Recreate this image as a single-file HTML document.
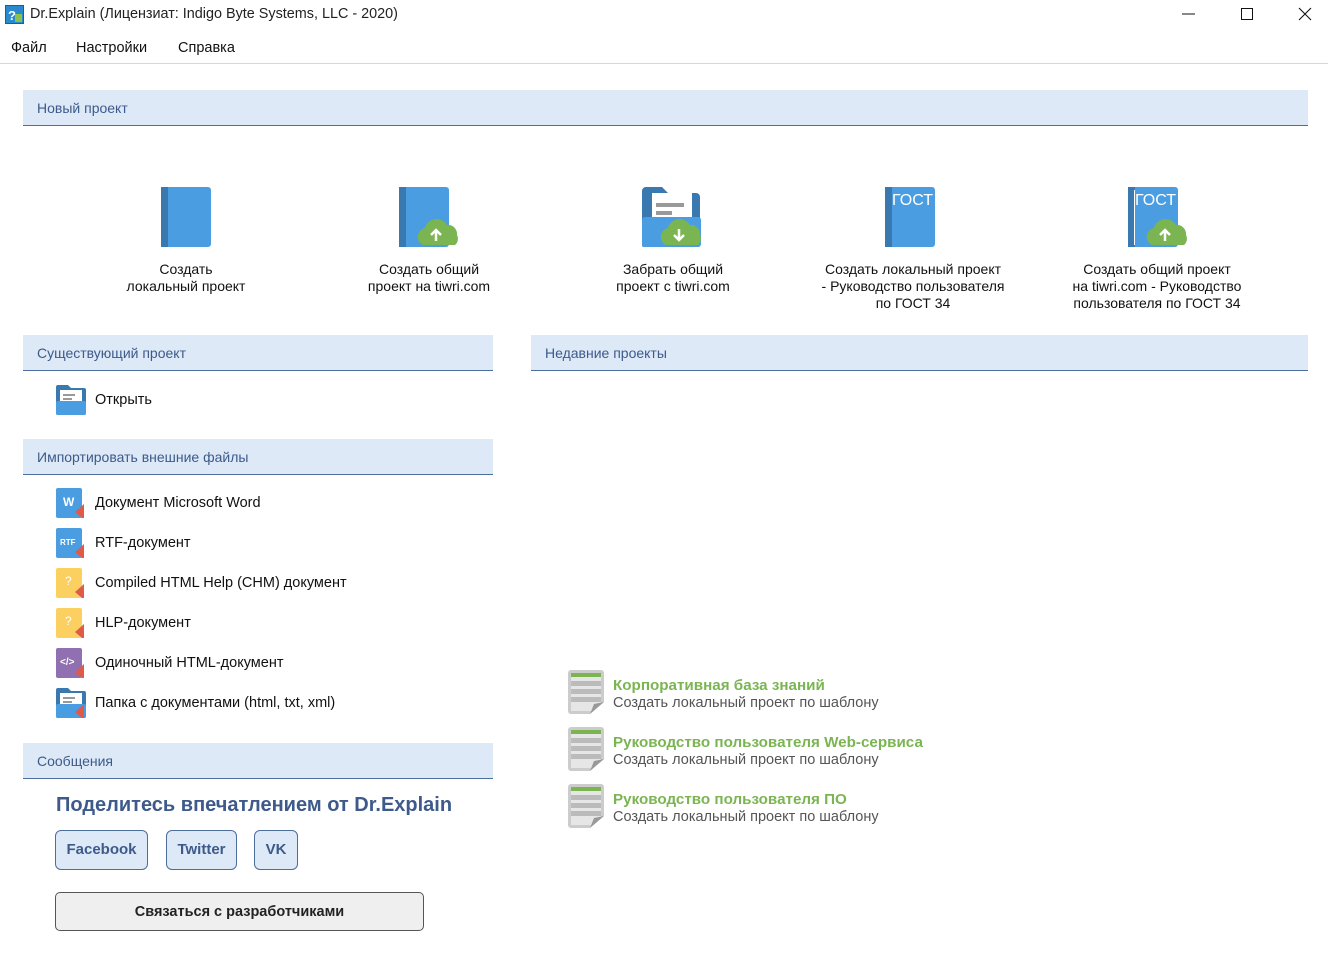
<!DOCTYPE html>
<html><head><meta charset="utf-8">
<style>
*{margin:0;padding:0;box-sizing:border-box}
body{width:1328px;height:973px;background:#fff;font-family:"Liberation Sans",Arial,sans-serif;position:relative;overflow:hidden;color:#111}
.a{position:absolute}
.title{left:30px;top:6px;font-size:14.4px;color:#222}
.menu{top:40px;font-size:14.5px;color:#111}
.hdr{position:absolute;background:#dde9f7;border-bottom:1.5px solid #4d6d9c;height:36px;font-size:14px;color:#3d5a8a;padding:10px 0 0 14px}
.cap{position:absolute;text-align:center;font-size:14px;line-height:17px;color:#111;width:240px}
.item{position:absolute;left:95px;font-size:14.5px;color:#111}
.ic{position:absolute;left:56px}
.tg{position:absolute;left:613px;font-size:14.5px;line-height:17px}
.tg b{color:#7ab552;font-weight:bold;font-size:15.2px}
.tg span{color:#555}
.btn{position:absolute;top:830px;height:40px;background:#dde9f7;border:1px solid #4d6d9c;border-radius:6px;font-weight:bold;font-size:15px;color:#3d5a8a;text-align:center;line-height:38px}
</style></head><body>
<svg class="a" style="left:5px;top:5px" width="19" height="19"><rect x="0.5" y="0.5" width="18" height="18" fill="#2a8ad0" stroke="#1b5f9a"/><text x="3" y="15" font-size="13" font-weight="bold" fill="#fff" font-family="Liberation Sans">?</text><rect x="10" y="9" width="7" height="8" fill="#8bc34a"/></svg>
<div class="a title">Dr.Explain (Лицензиат: Indigo Byte Systems, LLC - 2020)</div>
<svg class="a" style="left:1180px;top:6px" width="140" height="18"><line x1="2" y1="8" x2="15" y2="8" stroke="#111"/><rect x="61.5" y="2.5" width="11" height="11" fill="none" stroke="#111"/><path d="M119 2 L131 14 M131 2 L119 14" stroke="#111" stroke-width="1.1"/></svg>
<div class="a menu" style="left:11px">Файл</div>
<div class="a menu" style="left:76px">Настройки</div>
<div class="a menu" style="left:178px">Справка</div>
<div class="a" style="left:0;top:63px;width:1328px;height:1px;background:#d8d8d8"></div>

<div class="hdr" style="left:23px;top:90px;width:1285px">Новый проект</div>

<svg width="0" height="0" style="position:absolute">
<defs>
<g id="book"><rect x="0" y="0" width="50" height="60" rx="3" fill="#4a9de0"/><rect x="0" y="0" width="7" height="60" fill="#3a78b0"/></g>
<g id="cloudup"><path d="M10 32 a9 9 0 0 1 2-17 a12 12 0 0 1 22-3 a9 9 0 0 1 10 10 a8 8 0 0 1-2 10z" fill="#7ab552"/><path d="M23 28 v-10 M18 22 l5-5 5 5" stroke="#fff" stroke-width="2.5" fill="none"/></g>
<g id="cloudown"><path d="M10 32 a9 9 0 0 1 2-17 a12 12 0 0 1 22-3 a9 9 0 0 1 10 10 a8 8 0 0 1-2 10z" fill="#7ab552"/><path d="M23 16 v10 M18 22 l5 5 5-5" stroke="#fff" stroke-width="2.5" fill="none"/></g>
<g id="folder"><path d="M0 2 a2 2 0 0 1 2-2 h10 l3 3 h13 a2 2 0 0 1 2 2 v23 a2 2 0 0 1-2 2 h-26 a2 2 0 0 1-2-2z" fill="#3a78b0"/><rect x="4" y="5" width="22" height="14" fill="#fff"/><rect x="7" y="9" width="12" height="2" fill="#999"/><rect x="7" y="13" width="9" height="2" fill="#999"/><rect x="0" y="16" width="30" height="14" rx="2" fill="#4a9de0"/></g>
<g id="tpl"><rect x="0" y="0" width="36" height="44" rx="3" fill="#ccc"/><rect x="3" y="3" width="30" height="38" fill="#e6e6e6"/><rect x="3" y="3" width="30" height="4" fill="#7ab552"/><rect x="3" y="11" width="30" height="5" fill="#bbb"/><rect x="3" y="19" width="30" height="5" fill="#bbb"/><rect x="3" y="27" width="30" height="5" fill="#bbb"/><path d="M22 44 L36 32 V44Z" fill="#fff"/><path d="M22 44 L26 34 L36 32Z" fill="#999"/></g>
<path id="mk" d="M19 24 l9-8 v14 h-2z" fill="#e05a4a"/>
</defs></svg>

<svg class="a" style="left:161px;top:187px" width="52" height="62"><use href="#book"/></svg>
<svg class="a" style="left:399px;top:187px" width="62" height="62"><use href="#book"/><g transform="translate(14,26)"><use href="#cloudup"/></g></svg>
<svg class="a" style="left:642px;top:187px" width="62" height="62"><g transform="scale(2)"><path d="M0 2 a2 2 0 0 1 2-2 h8 l3 3 h14 a2 2 0 0 1 2 2 v24 a1 1 0 0 1-1 1 h-27 a1 1 0 0 1-1-1z" fill="#3a78b0"/><rect x="5" y="3" width="20" height="16" fill="#fff"/><rect x="7" y="8" width="14" height="2" fill="#999"/><rect x="7" y="12" width="8" height="2" fill="#999"/><rect x="0" y="15" width="29.5" height="15" rx="1.5" fill="#4a9de0"/></g><g transform="translate(14,26)"><use href="#cloudown"/></g></svg>
<svg class="a" style="left:885px;top:187px" width="52" height="62"><use href="#book"/><text x="7" y="18" font-size="16" fill="#fff" font-family="Liberation Sans">ГОСТ</text></svg>
<svg class="a" style="left:1128px;top:187px" width="62" height="62"><use href="#book"/><rect x="6" y="3" width="1" height="55" fill="#fff"/><text x="7" y="18" font-size="16" fill="#fff" font-family="Liberation Sans">ГОСТ</text><g transform="translate(14,26)"><use href="#cloudup"/></g></svg>

<div class="cap" style="left:66px;top:261px">Создать<br>локальный проект</div>
<div class="cap" style="left:309px;top:261px">Создать общий<br>проект на tiwri.com</div>
<div class="cap" style="left:553px;top:261px">Забрать общий<br>проект с tiwri.com</div>
<div class="cap" style="left:793px;top:261px">Создать локальный проект<br>- Руководство пользователя<br>по ГОСТ 34</div>
<div class="cap" style="left:1037px;top:261px">Создать общий проект<br>на tiwri.com - Руководство<br>пользователя по ГОСТ 34</div>

<div class="hdr" style="left:23px;top:335px;width:470px">Существующий проект</div>
<div class="hdr" style="left:531px;top:335px;width:777px">Недавние проекты</div>
<svg class="ic" style="top:385px" width="31" height="31"><use href="#folder"/></svg>
<div class="item" style="top:392px">Открыть</div>

<div class="hdr" style="left:23px;top:439px;width:470px">Импортировать внешние файлы</div>
<svg class="ic" style="top:488px" width="30" height="32"><rect width="26" height="30" rx="2" fill="#4a9de0"/><text x="7" y="18" font-size="12" font-weight="bold" fill="#fff" font-family="Liberation Sans">W</text><use href="#mk"/></svg>
<div class="item" style="top:495px">Документ Microsoft Word</div>
<svg class="ic" style="top:528px" width="30" height="32"><rect width="26" height="30" rx="2" fill="#4a9de0"/><text x="4" y="17" font-size="8" font-weight="bold" fill="#fff" font-family="Liberation Sans">RTF</text><use href="#mk"/></svg>
<div class="item" style="top:535px">RTF-документ</div>
<svg class="ic" style="top:568px" width="30" height="32"><rect width="26" height="30" rx="2" fill="#fcd060"/><text x="9" y="17" font-size="12" fill="#fff" font-family="Liberation Sans">?</text><use href="#mk"/></svg>
<div class="item" style="top:575px">Compiled HTML Help (CHM) документ</div>
<svg class="ic" style="top:608px" width="30" height="32"><rect width="26" height="30" rx="2" fill="#fcd060"/><text x="9" y="17" font-size="12" fill="#fff" font-family="Liberation Sans">?</text><use href="#mk"/></svg>
<div class="item" style="top:615px">HLP-документ</div>
<svg class="ic" style="top:648px" width="30" height="32"><rect width="26" height="30" rx="2" fill="#9070b0"/><text x="4" y="17" font-size="10" font-weight="bold" fill="#fff" font-family="Liberation Sans">&lt;/&gt;</text><use href="#mk"/></svg>
<div class="item" style="top:655px">Одиночный HTML-документ</div>
<svg class="ic" style="top:688px" width="31" height="32"><use href="#folder"/><use href="#mk"/></svg>
<div class="item" style="top:695px">Папка с документами (html, txt, xml)</div>

<div class="hdr" style="left:23px;top:743px;width:470px">Сообщения</div>
<div class="a" style="left:56px;top:794px;font-size:20px;font-weight:bold;color:#3d5a8a">Поделитесь впечатлением от Dr.Explain</div>
<div class="btn" style="left:55px;width:93px">Facebook</div>
<div class="btn" style="left:166px;width:71px">Twitter</div>
<div class="btn" style="left:254px;width:44px">VK</div>
<div class="a" style="left:55px;top:892px;width:369px;height:39px;background:#efefef;border:1px solid #555;border-radius:5px;text-align:center;line-height:39px;font-weight:bold;font-size:14.5px;color:#222">Связаться с разработчиками</div>

<svg class="a" style="left:568px;top:670px" width="38" height="46"><use href="#tpl"/></svg>
<div class="tg" style="top:677px"><b>Корпоративная база знаний</b><br><span>Создать локальный проект по шаблону</span></div>
<svg class="a" style="left:568px;top:727px" width="38" height="46"><use href="#tpl"/></svg>
<div class="tg" style="top:734px"><b>Руководство пользователя Web-сервиса</b><br><span>Создать локальный проект по шаблону</span></div>
<svg class="a" style="left:568px;top:784px" width="38" height="46"><use href="#tpl"/></svg>
<div class="tg" style="top:791px"><b>Руководство пользователя ПО</b><br><span>Создать локальный проект по шаблону</span></div>
</body></html>
